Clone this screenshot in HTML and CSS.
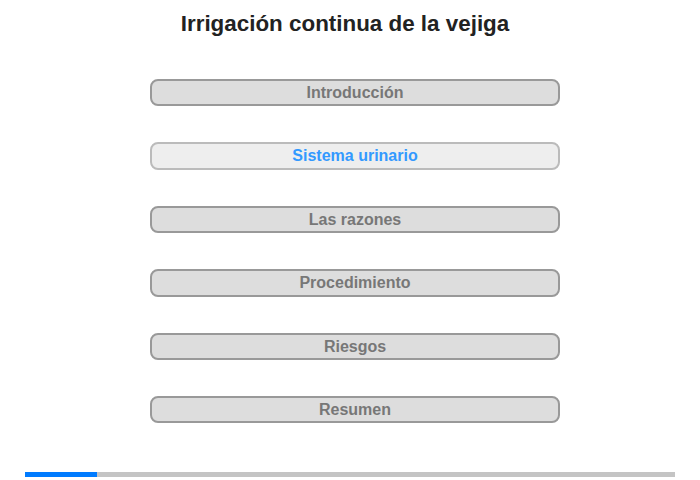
FILE: index.html
```html
<!DOCTYPE html>
<html lang="es">
<head>
<meta charset="utf-8">
<link rel="stylesheet" href="styles.css">
</head>
<body>
<div class="page">
  <h1 class="title">Irrigación continua de la vejiga</h1>
  <nav class="menu">
    <div class="item">Introducción</div>
    <div class="item active">Sistema urinario</div>
    <div class="item">Las razones</div>
    <div class="item">Procedimiento</div>
    <div class="item">Riesgos</div>
    <div class="item">Resumen</div>
  </nav>
  <div class="progress"><div class="progress-fill"></div></div>
</div>
</body>
</html>
```
FILE: styles.css
```css
html, body {
  margin: 0;
  padding: 0;
  background: #fff;
}
.page {
  width: 700px;
  height: 480px;
  position: relative;
  font-family: "Liberation Sans", Arial, sans-serif;
}
.title {
  margin: 0;
  padding-top: 10px;
  height: 31px;
  text-align: center;
  font-size: 22.4px;
  font-weight: bold;
  color: #222;
  line-height: 28px;
  padding-right: 10px;
}
.menu {
  display: flex;
  flex-direction: column;
  gap: 36px;
  margin-top: 38px;
  margin-left: 150px;
  width: 410px;
}
.item {
  box-sizing: border-box;
  height: 27.4px;
  border: 2px solid #999;
  border-radius: 8px;
  background: #ddd;
  color: #777;
  font-size: 16px;
  font-weight: bold;
  text-align: center;
  line-height: 23px;
}
.item.active {
  background: #eee;
  border-color: #bbb;
  color: #3399ff;
}
.progress {
  position: absolute;
  left: 25px;
  top: 472px;
  width: 650px;
  height: 5px;
  background: #c4c4c4;
}
.progress-fill {
  width: 72px;
  height: 100%;
  background: #007bff;
}
```
